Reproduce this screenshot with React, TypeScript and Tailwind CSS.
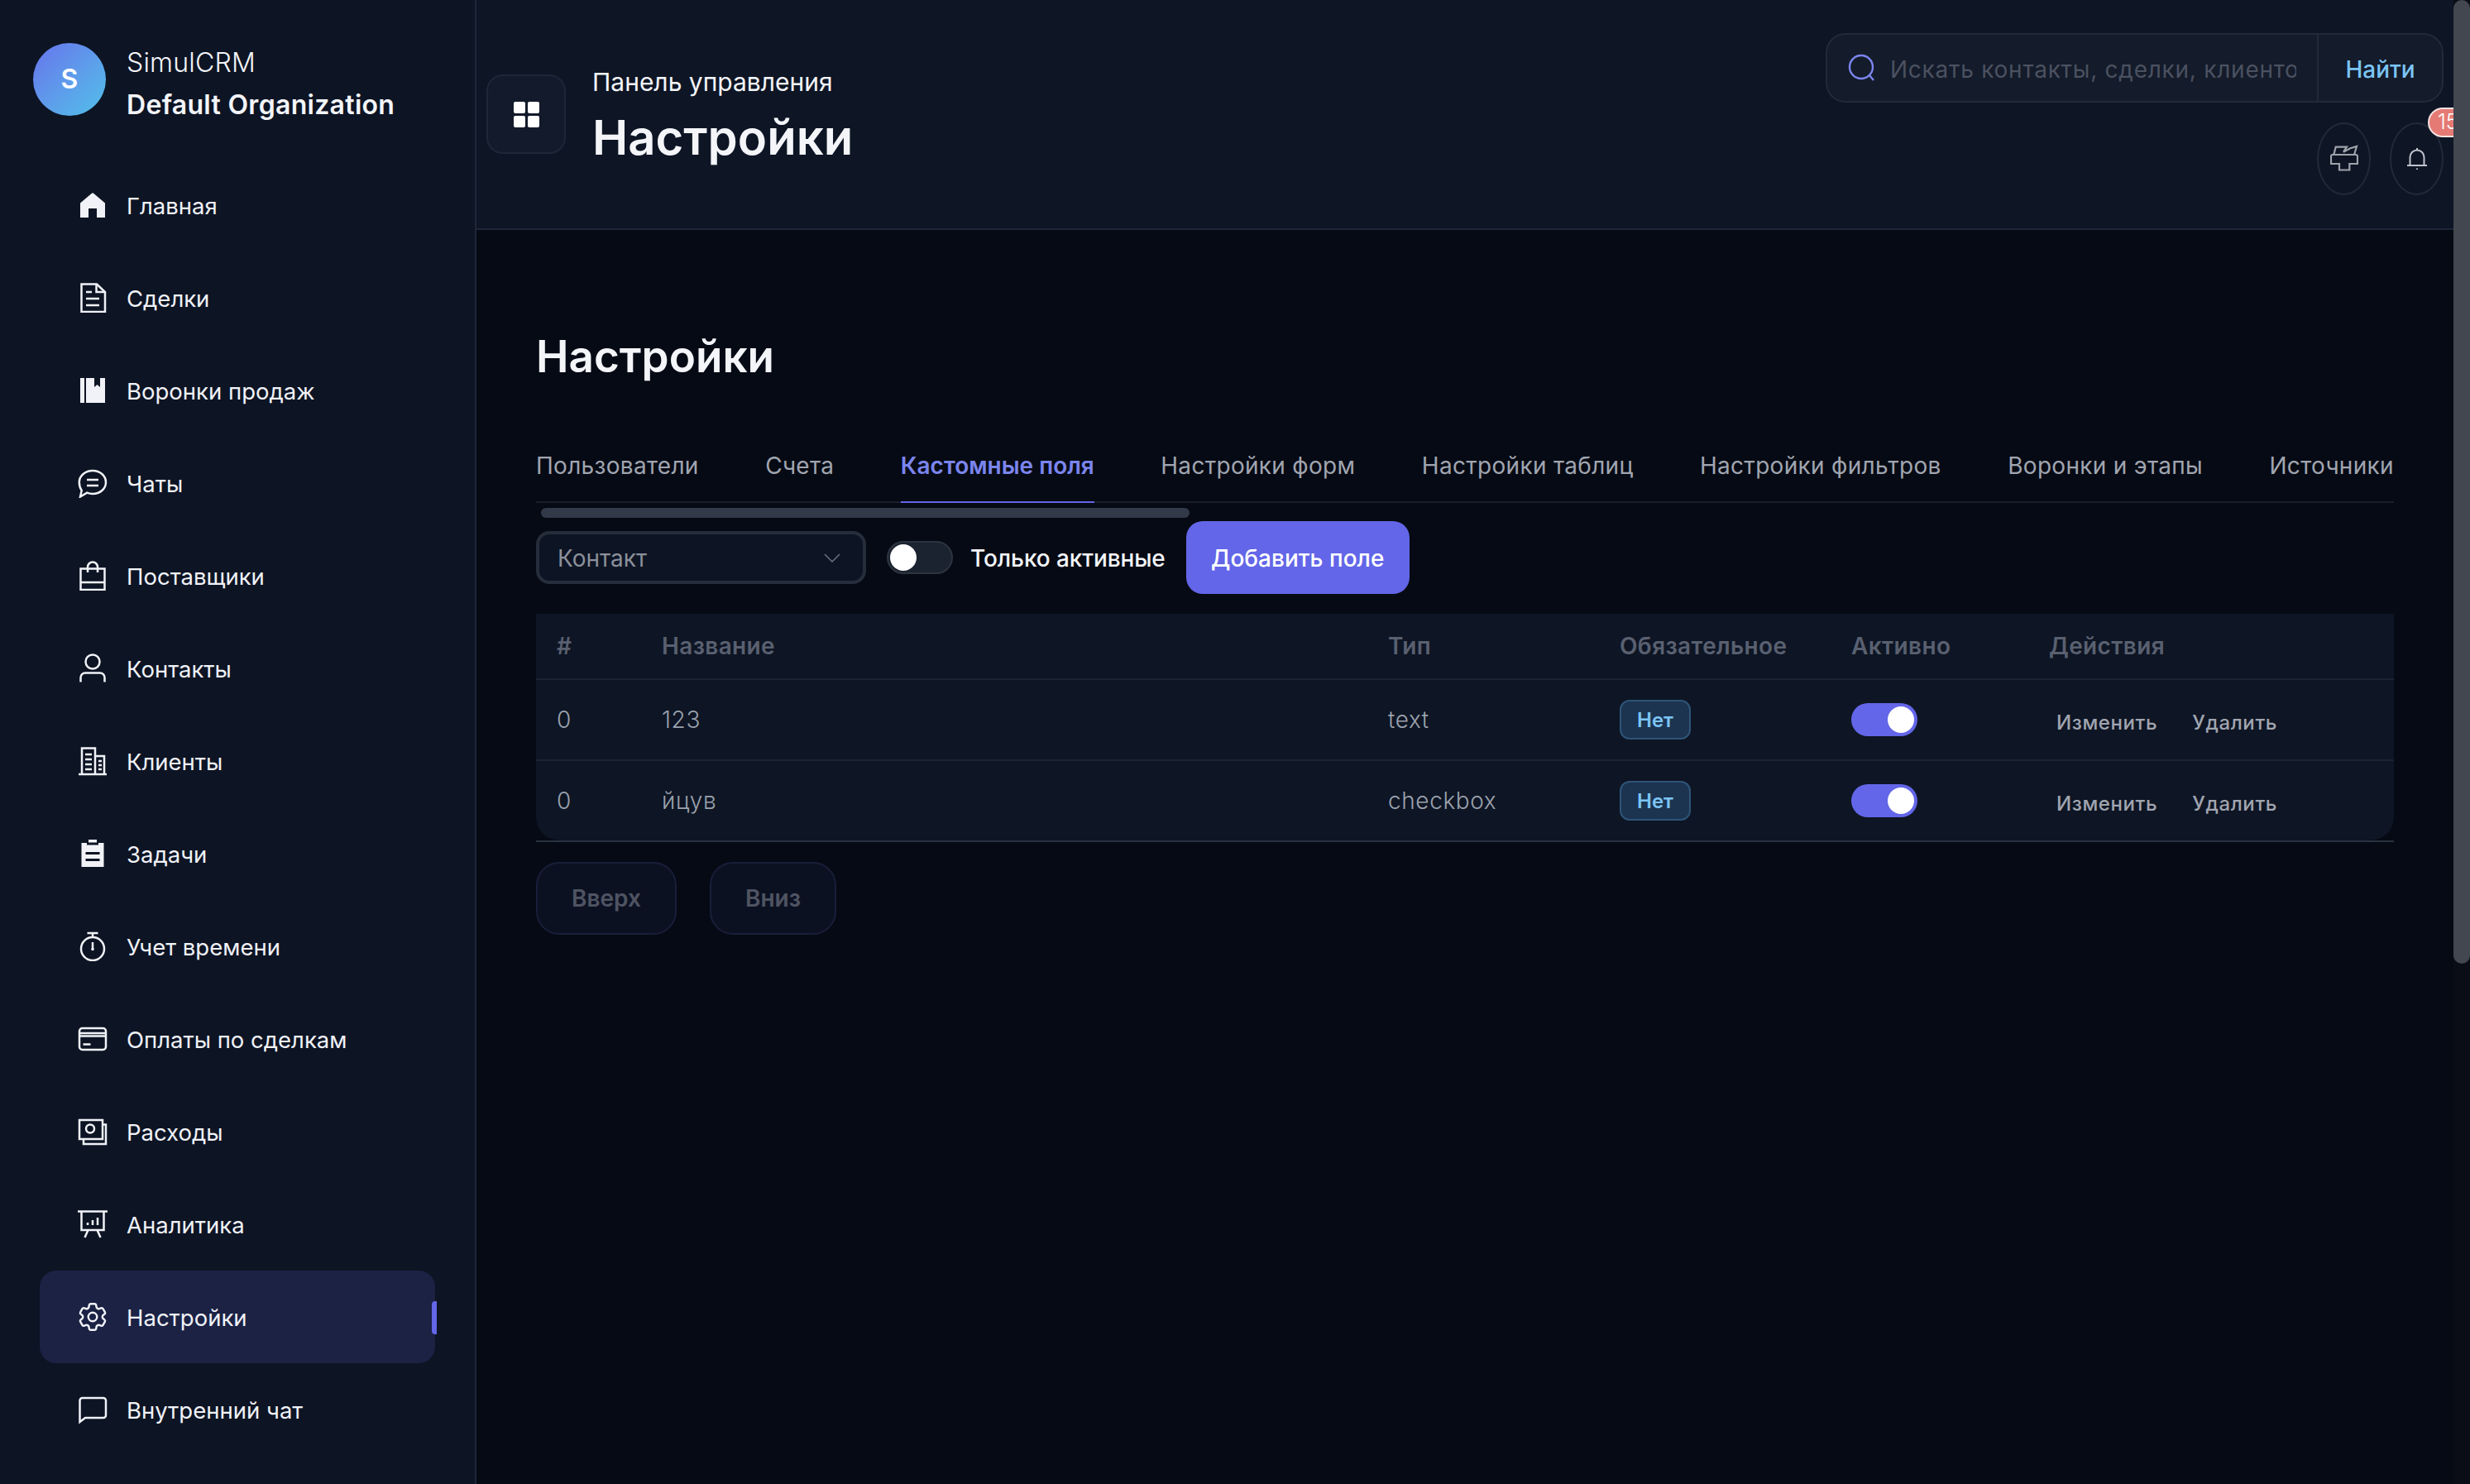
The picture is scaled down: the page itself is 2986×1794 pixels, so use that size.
import React from 'react';
import { HiOutlineCog6Tooth } from 'react-icons/hi2';

const base = {
    width: 36,
    height: 36,
    viewBox: '0 0 36 36',
    fill: 'none',
    stroke: 'currentColor',
    strokeWidth: 2.5,
} as const;

const HomeIcon = () => (
    <svg width={36} height={36} viewBox="0 0 36 36" fill="currentColor">
        <path d="M3 15.5 16.6 4a2 2 0 0 1 2.8 0L33 15.5V33H23V22H13v11H3Z" />
    </svg>
);
const DocIcon = () => (
    <svg {...base}>
        <path d="M4.500 1.500h18.500l10 9.500v24H4.500Z" />
        <path d="M22.500 1.500V11H33M10 11h7M10 19h16M10 27h16" />
    </svg>
);
const FunnelBookIcon = () => (
    <svg width={36} height={36} viewBox="0 0 36 36" fill="currentColor">
        <path d="M3 3h5v30H3ZM10 3h10v11l3.500-3 3.500 3V3h6v30H10Z" />
    </svg>
);
const ChatIcon = () => (
    <svg {...base}>
        <path d="M18 3c8.800 0 16 6 16 14s-7.200 14-16 14c-2.500 0-4.800-.5-6.800-1.300L3 34.500l1.700-7.500C2.800 24.300 1.800 21 1.800 17 1.800 9 9.200 3 18 3Z" />
        <path d="M11 14h14M11 21h14" />
    </svg>
);
const BagIcon = () => (
    <svg {...base}>
        <path d="M3.500 9.500h29V35h-29ZM3.500 26h29" />
        <path d="M12 14V7.500a6 6 0 0 1 12 0V14" />
    </svg>
);
const UserIcon = () => (
    <svg {...base}>
        <circle cx="18" cy="10" r="8.500" />
        <path d="M3.500 34.500V29a5.500 5.500 0 0 1 5.500-5.500h18a5.500 5.500 0 0 1 5.500 5.500v5.500" />
    </svg>
);
const BuildingIcon = () => (
    <svg {...base}>
        <path d="M1 34h34M5 34V2.500h16V34M21 12h11v22" />
        <path d="M9 10h8M9 16h8M9 22h8M9 28h8M25 18h4M25 23h4M25 28h4" />
    </svg>
);
const ClipboardIcon = () => (
    <svg width={36} height={36} viewBox="0 0 36 36" fill="currentColor">
        <path d="M13 1h10v3.500H13ZM4.500 5H11v2.500h14V5h6.500v29h-27Z" />
        <path d="M9.500 16h17v3h-17ZM9.500 24h17v3h-17Z" fill="#0d1424" />
    </svg>
);
const StopwatchIcon = () => (
    <svg {...base}>
        <circle cx="18" cy="21" r="14" />
        <path d="M11.500 2h13M18 2v5M18 13v8" />
        <circle cx="18" cy="21.500" r="1.800" fill="currentColor" stroke="none" />
    </svg>
);
const CardIcon = () => (
    <svg {...base}>
        <rect x="2" y="5" width="32" height="26" rx="3.500" />
        <path d="M2 11h32M2 14.500h32M6.500 24.500h9" />
    </svg>
);
const MoneyIcon = () => (
    <svg {...base}>
        <path d="M2 4h28v23H2Z" />
        <path d="M30 9.500h4V33H7v-6" />
        <circle cx="15" cy="14.500" r="5" />
    </svg>
);
const BoardIcon = () => (
    <svg {...base}>
        <path d="M0 2.500h36M4.500 2.500V25h27V2.500M12.500 25l-4 9M23.500 25l4 9" />
        <path d="M12 19v-3M18 19v-6M24 19V10" />
    </svg>
);
const GearIcon = () => <HiOutlineCog6Tooth className="-m-[3px] size-[42px]" strokeWidth={1.4} />;
const BubbleIcon = () => (
    <svg {...base}>
        <path d="M6 4h25a3 3 0 0 1 3 3v18a3 3 0 0 1-3 3H9l-6.500 5V7a3 3 0 0 1 3-3Z" />
    </svg>
);

const navItems = [
    { label: 'Главная', icon: HomeIcon },
    { label: 'Сделки', icon: DocIcon },
    { label: 'Воронки продаж', icon: FunnelBookIcon },
    { label: 'Чаты', icon: ChatIcon },
    { label: 'Поставщики', icon: BagIcon },
    { label: 'Контакты', icon: UserIcon },
    { label: 'Клиенты', icon: BuildingIcon },
    { label: 'Задачи', icon: ClipboardIcon },
    { label: 'Учет времени', icon: StopwatchIcon },
    { label: 'Оплаты по сделкам', icon: CardIcon },
    { label: 'Расходы', icon: MoneyIcon },
    { label: 'Аналитика', icon: BoardIcon },
    { label: 'Настройки', icon: GearIcon, active: true },
    { label: 'Внутренний чат', icon: BubbleIcon },
];

const tabs = [
    'Пользователи',
    'Счета',
    'Кастомные поля',
    'Настройки форм',
    'Настройки таблиц',
    'Настройки фильтров',
    'Воронки и этапы',
    'Источники',
];

const fields = [
    { order: '0', name: '123', type: 'text' },
    { order: '0', name: 'йцув', type: 'checkbox' },
];

const gridCols = 'grid grid-cols-[127px_878px_280px_280px_239px_1fr] items-center px-[25px]';

const Sidebar = () => (
    <aside className="flex h-full w-[576px] shrink-0 flex-col border-r-2 border-[#1e2638] bg-[#0d1424]">
        <div className="flex h-[192px] items-start gap-[25px] pl-[40px] pt-[52px]">
            <div className="flex size-[88px] items-center justify-center rounded-full bg-gradient-to-br from-[#6673ec] to-[#4fc0e8] text-[32px] font-semibold text-white">
                S
            </div>
            <div className="-mt-[2px] flex flex-col text-[#f3f5f9]">
                <span className="text-[32px] leading-[51px] font-light tracking-[0.2px]">SimulCRM</span>
                <span className="text-[32px] leading-[51px] font-semibold tracking-[0.3px]">Default Organization</span>
            </div>
        </div>
        <nav className="flex flex-col">
            {navItems.map((item) => {
                const Icon = item.icon;
                return (
                    <div
                        key={item.label}
                        className={`relative ml-[48px] flex h-[112px] w-[478px] items-center gap-[23px] rounded-[20px] pl-[46px] text-[27.5px] text-[#f0f2f7] ${item.active ? 'bg-[#1b2244]' : ''}`}
                    >
                        <Icon />
                        <span className="mt-[3px]">{item.label}</span>
                        {item.active && (
                            <span className="absolute right-[-2px] top-[37px] h-[40px] w-[6px] rounded-l-[4px] bg-[#6366e8]" />
                        )}
                    </div>
                );
            })}
        </nav>
    </aside>
);

const Header = () => (
    <header className="flex h-[278px] shrink-0 justify-between border-b-2 border-[#1e2638] bg-[#0e1525] pl-[12px] pr-[12px]">
        <div className="flex items-start gap-[32px] pt-[70px]">
            <div className="mt-[20px] grid size-[96px] grid-cols-[14px_14px] content-center justify-center gap-[3px] rounded-[20px] border-2 border-[#1e2638] bg-[#131a2b]">
                <span className="h-[14px] rounded-[2px] bg-white" />
                <span className="h-[14px] rounded-[2px] bg-white" />
                <span className="h-[14px] rounded-[2px] bg-white" />
                <span className="h-[14px] rounded-[2px] bg-white" />
            </div>
            <div className="flex flex-col text-[#f3f5f9]">
                <span className="text-[30px] leading-[58px]">Панель управления</span>
                <span className="text-[58px] leading-[76px] font-semibold">Настройки</span>
            </div>
        </div>
        <div className="flex flex-col items-end pt-[40px]">
            <div className="flex h-[84px] w-[747px] items-center rounded-[24px] border-2 border-[#222a3a] bg-[#141b2a]">
                <svg width={34} height={34} viewBox="0 0 34 34" fill="none" stroke="#7b85ee" strokeWidth={2.4} className="ml-[25px] shrink-0">
                    <circle cx="16" cy="16" r="14" />
                    <path d="m26 26 5 6" />
                </svg>
                <span className="ml-[17px] mt-[3px] w-[491px] overflow-hidden text-[28px] tracking-[0.75px] whitespace-nowrap text-[#4a5160]">
                    Искать контакты, сделки, клиентов
                </span>
                <div className="ml-[25px] flex h-full flex-1 items-center justify-center border-l-2 border-[#222a3a] pt-[3px] text-[28px] font-medium text-[#7cc4f5]">
                    Найти
                </div>
            </div>
            <div className="relative mt-[24px] flex gap-[23px]">
                <div className="flex h-[88px] w-[65px] items-center justify-center rounded-[50%] border-2 border-[#222a3a]">
                    <svg width={34} height={34} viewBox="0 0 34 34" fill="none" stroke="#9ea2aa" strokeWidth={2.2}>
                        <path d="M4.300 12 6.700 2.700H20L16 8.700l8.300-4.400L32 2l-3 10" />
                        <path d="M3 12h28a2 2 0 0 1 2 2v9h-9.700v7.500H11V23H1v-9a2 2 0 0 1 2-2Z" />
                    </svg>
                </div>
                <div className="flex h-[88px] w-[65px] items-center justify-center rounded-[50%] border-2 border-[#222a3a]">
                    <svg width={26} height={28} viewBox="0 0 26 28" fill="none" stroke="#c0c4cc" strokeWidth={2}>
                        <path d="M1 22h24M4.500 22V12a8.500 8.500 0 0 1 17 0v10M13 1v2.500M13 25.500V27" />
                    </svg>
                </div>
                <span className="absolute right-[-32px] top-[-18px] flex h-[36px] w-[51px] items-center justify-start rounded-full border-2 border-[#f3e2e2] bg-[#e57a74] pl-[10px] text-[25px] font-light text-white">
                    15
                </span>
            </div>
        </div>
    </header>
);

const Switch = () => (
    <div className="flex h-[40px] w-[80px] items-center justify-end rounded-full bg-[#6366e8] pr-[4px]">
        <span className="size-[32px] rounded-full bg-white" />
    </div>
);

const FieldsTable = () => (
    <div>
        <div className="rounded-b-[28px] bg-[#0e1524]">
            <div className={`${gridCols} h-[78px] text-[28px] font-semibold tracking-[0.35px] text-[#596070]`}>
                <span>#</span>
                <span>Название</span>
                <span>Тип</span>
                <span>Обязательное</span>
                <span>Активно</span>
                <span>Действия</span>
            </div>
            {fields.map((field) => (
                <div key={field.name} className={`${gridCols} h-[98px] border-t-2 border-[#1c2433] text-[28px] font-light tracking-[0.6px] text-[#9aa1ad]`}>
                    <span>{field.order}</span>
                    <span>{field.name}</span>
                    <span>{field.type}</span>
                    <span className="flex h-[48px] w-[86px] items-center justify-center rounded-[12px] border-2 border-[#2e5478] bg-[#1c3450] pt-[2px] text-[24px] font-semibold tracking-normal text-[#7cc4f5]">
                        Нет
                    </span>
                    <Switch />
                    <div className="mt-[7px] flex gap-[42px] pl-[9px] text-[24px] font-medium tracking-[0.6px] text-[#a0a5b0]">
                        <span>Изменить</span>
                        <span>Удалить</span>
                    </div>
                </div>
            ))}
        </div>
        <div className="h-[2px] bg-[#2a3140]" />
    </div>
);

const Content = () => (
    <main className="flex-1 bg-[#060a14] pl-[72px] pr-[72px]">
        <h1 className="pt-[121px] text-[53px] leading-[64px] font-semibold text-[#f3f5f9]">Настройки</h1>

        <div className="mt-[79px] flex h-[66px] justify-between border-b-2 border-[#191f2c] text-[28px]">
            {tabs.map((tab) => (
                <span
                    key={tab}
                    className={`-mb-[2px] whitespace-nowrap ${tab === 'Кастомные поля' ? 'border-b-2 border-[#6366e8] font-semibold text-[#7b85ee]' : 'tracking-[0.3px] text-[#a0a5b0]'}`}
                >
                    {tab}
                </span>
            ))}
        </div>
        <div className="ml-[6px] mt-[6px] h-[12px] w-[784px] rounded-full bg-[#323a49]" />

        <div className="mt-[4px] flex items-center">
            <div className="flex h-[64px] w-[399px] items-center justify-between rounded-[16px] border-4 border-[#262d3b] bg-[#0d1424] pl-[22px] pr-[27px] text-[28px] text-[#8b909a]">
                <span className="pt-[1px]">Контакт</span>
                <svg width={20} height={11} viewBox="0 0 20 11" fill="none" stroke="#6b7280" strokeWidth={1.5}>
                    <path d="m1 1 9 9 9-9" />
                </svg>
            </div>
            <div className="ml-[25px] flex h-[40px] w-[80px] items-center rounded-full border-2 border-[#2d3440] bg-[#1c2330] pl-[2px]">
                <span className="size-[32px] rounded-full bg-white" />
            </div>
            <span className="ml-[21px] pt-[1px] text-[28px] font-medium tracking-[-0.1px] text-[#f3f5f9]">Только активные</span>
            <button className="ml-[25px] h-[88px] w-[270px] rounded-[20px] bg-[#6366e8] pt-[1px] text-[28px] font-medium text-white">
                Добавить поле
            </button>
        </div>

        <div className="mt-[24px]">
            <FieldsTable />
        </div>

        <div className="mt-[24px] flex gap-[40px]">
            <button className="h-[88px] w-[170px] rounded-[28px] border-2 border-[#191e3a] bg-[#0c1122] text-[28px] font-semibold text-[#4f5462]">
                Вверх
            </button>
            <button className="h-[88px] w-[153px] rounded-[28px] border-2 border-[#191e3a] bg-[#0c1122] text-[28px] font-semibold text-[#4f5462]">
                Вниз
            </button>
        </div>
    </main>
);

export default function App() {
    return (
        <div className="flex h-[1794px] w-[2986px] overflow-hidden bg-[#060a14] font-['Inter',sans-serif]">
            <Sidebar />
            <div className="flex min-w-0 flex-1 flex-col">
                <Header />
                <Content />
            </div>
            <div className="relative z-10 w-[20px] shrink-0 bg-[#0a0d16]">
                <div className="h-[1165px] rounded-full bg-[#43474f]" />
            </div>
        </div>
    );
}
